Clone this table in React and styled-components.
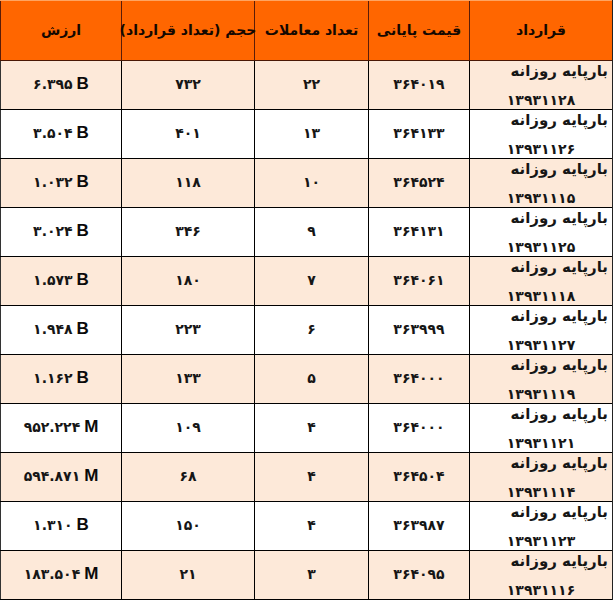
import React from "react";
import styled, { createGlobalStyle } from "styled-components";

const GlobalStyle = createGlobalStyle`
  html, body {
    margin: 0;
    padding: 0;
    background: #ffffff;
  }
`;

// widths from right to left, each including its left border
const columns = [
  { title: "قرارداد", width: 143 },
  { title: "قیمت پایانی", width: 101 },
  { title: "تعداد معاملات", width: 114 },
  { title: "حجم (تعداد قرارداد)", width: 133 },
  { title: "ارزش", width: 121 }
];

const rows = [
  { date: "۱۳۹۳۱۱۲۸", price: "۳۶۴۰۱۹", deals: "۲۲", volume: "۷۳۲", value: "۶.۳۹۵", unit: "B" },
  { date: "۱۳۹۳۱۱۲۶", price: "۳۶۴۱۳۳", deals: "۱۳", volume: "۴۰۱", value: "۳.۵۰۴", unit: "B" },
  { date: "۱۳۹۳۱۱۱۵", price: "۳۶۴۵۲۴", deals: "۱۰", volume: "۱۱۸", value: "۱.۰۳۲", unit: "B" },
  { date: "۱۳۹۳۱۱۲۵", price: "۳۶۴۱۳۱", deals: "۹", volume: "۳۴۶", value: "۳.۰۲۴", unit: "B" },
  { date: "۱۳۹۳۱۱۱۸", price: "۳۶۴۰۶۱", deals: "۷", volume: "۱۸۰", value: "۱.۵۷۳", unit: "B" },
  { date: "۱۳۹۳۱۱۲۷", price: "۳۶۳۹۹۹", deals: "۶", volume: "۲۲۳", value: "۱.۹۴۸", unit: "B" },
  { date: "۱۳۹۳۱۱۱۹", price: "۳۶۴۰۰۰", deals: "۵", volume: "۱۳۳", value: "۱.۱۶۲", unit: "B" },
  { date: "۱۳۹۳۱۱۲۱", price: "۳۶۴۰۰۰", deals: "۴", volume: "۱۰۹", value: "۹۵۲.۲۲۴", unit: "M" },
  { date: "۱۳۹۳۱۱۱۴", price: "۳۶۴۵۰۴", deals: "۴", volume: "۶۸", value: "۵۹۴.۸۷۱", unit: "M" },
  { date: "۱۳۹۳۱۱۲۳", price: "۳۶۳۹۸۷", deals: "۴", volume: "۱۵۰", value: "۱.۳۱۰", unit: "B" },
  { date: "۱۳۹۳۱۱۱۶", price: "۳۶۴۰۹۵", deals: "۳", volume: "۲۱", value: "۱۸۳.۵۰۴", unit: "M" }
];

const App = () => {
  const template = columns.map(c => `${c.width}px`).join(" ");
  return (
    <>
      <GlobalStyle />
      <Table dir="rtl">
        <HeadRow style={{ gridTemplateColumns: template }}>
          {columns.map(col => (
            <HeadCell key={col.title}>{col.title}</HeadCell>
          ))}
        </HeadRow>
        {rows.map((row, i) => (
          <Row key={i} $shaded={i % 2 === 0} style={{ gridTemplateColumns: template }}>
            <ContractCell>
              <ContractName>بارپایه روزانه</ContractName>
              <ContractDate>{row.date}</ContractDate>
            </ContractCell>
            <Cell>{row.price}</Cell>
            <Cell>{row.deals}</Cell>
            <Cell>{row.volume}</Cell>
            <Cell $edge>
              <Value dir="ltr">
                {row.value}
                <Unit>{row.unit}</Unit>
              </Value>
            </Cell>
          </Row>
        ))}
      </Table>
    </>
  );
};

export default App;

const Table = styled.div`
  width: 613px;
  height: 600px;
  box-sizing: border-box;
  border-right: 1px solid #222222;
  direction: rtl;
  font-family: "DejaVu Sans", sans-serif;
`;

const HeadRow = styled.div`
  display: grid;
  height: 61px;
  box-sizing: border-box;
  background: #ff6600;
  border-top: 1px solid #ffa461;
  border-bottom: 1px solid #4a1806;
`;

const HeadCell = styled.div`
  display: flex;
  align-items: center;
  justify-content: center;
  border-left: 1px solid #5a1c08;
  font-size: 14px;
  font-weight: bold;
  color: #140800;
  white-space: nowrap;
  padding-bottom: 2px;
`;

const Row = styled.div`
  display: grid;
  height: 49px;
  box-sizing: border-box;
  border-bottom: 1px solid #000000;
  background: ${props => (props.$shaded ? "#fde9d9" : "#ffffff")};
`;

const Cell = styled.div`
  display: flex;
  align-items: center;
  justify-content: center;
  border-left: 1px solid ${props => (props.$edge ? "#333333" : "#000000")};
  font-size: 14px;
  font-weight: bold;
  color: #161616;
  padding-bottom: 2px;
`;

const ContractCell = styled.div`
  display: flex;
  flex-direction: column;
  border-left: 1px solid #000000;
  font-weight: bold;
  color: #161616;
`;

const ContractName = styled.div`
  text-align: right;
  padding: 0 4px 0 0;
  font-size: 15px;
  line-height: 20px;
`;

const ContractDate = styled.div`
  text-align: center;
  margin-top: auto;
  font-size: 14px;
  line-height: 18px;
`;

const Value = styled.span`
  display: inline-flex;
  align-items: baseline;
  gap: 4px;
  white-space: nowrap;
`;

const Unit = styled.span`
  font-family: "Liberation Sans", Arial, sans-serif;
  font-size: 17px;
  font-weight: bold;
  color: #0a0a0a;
`;
